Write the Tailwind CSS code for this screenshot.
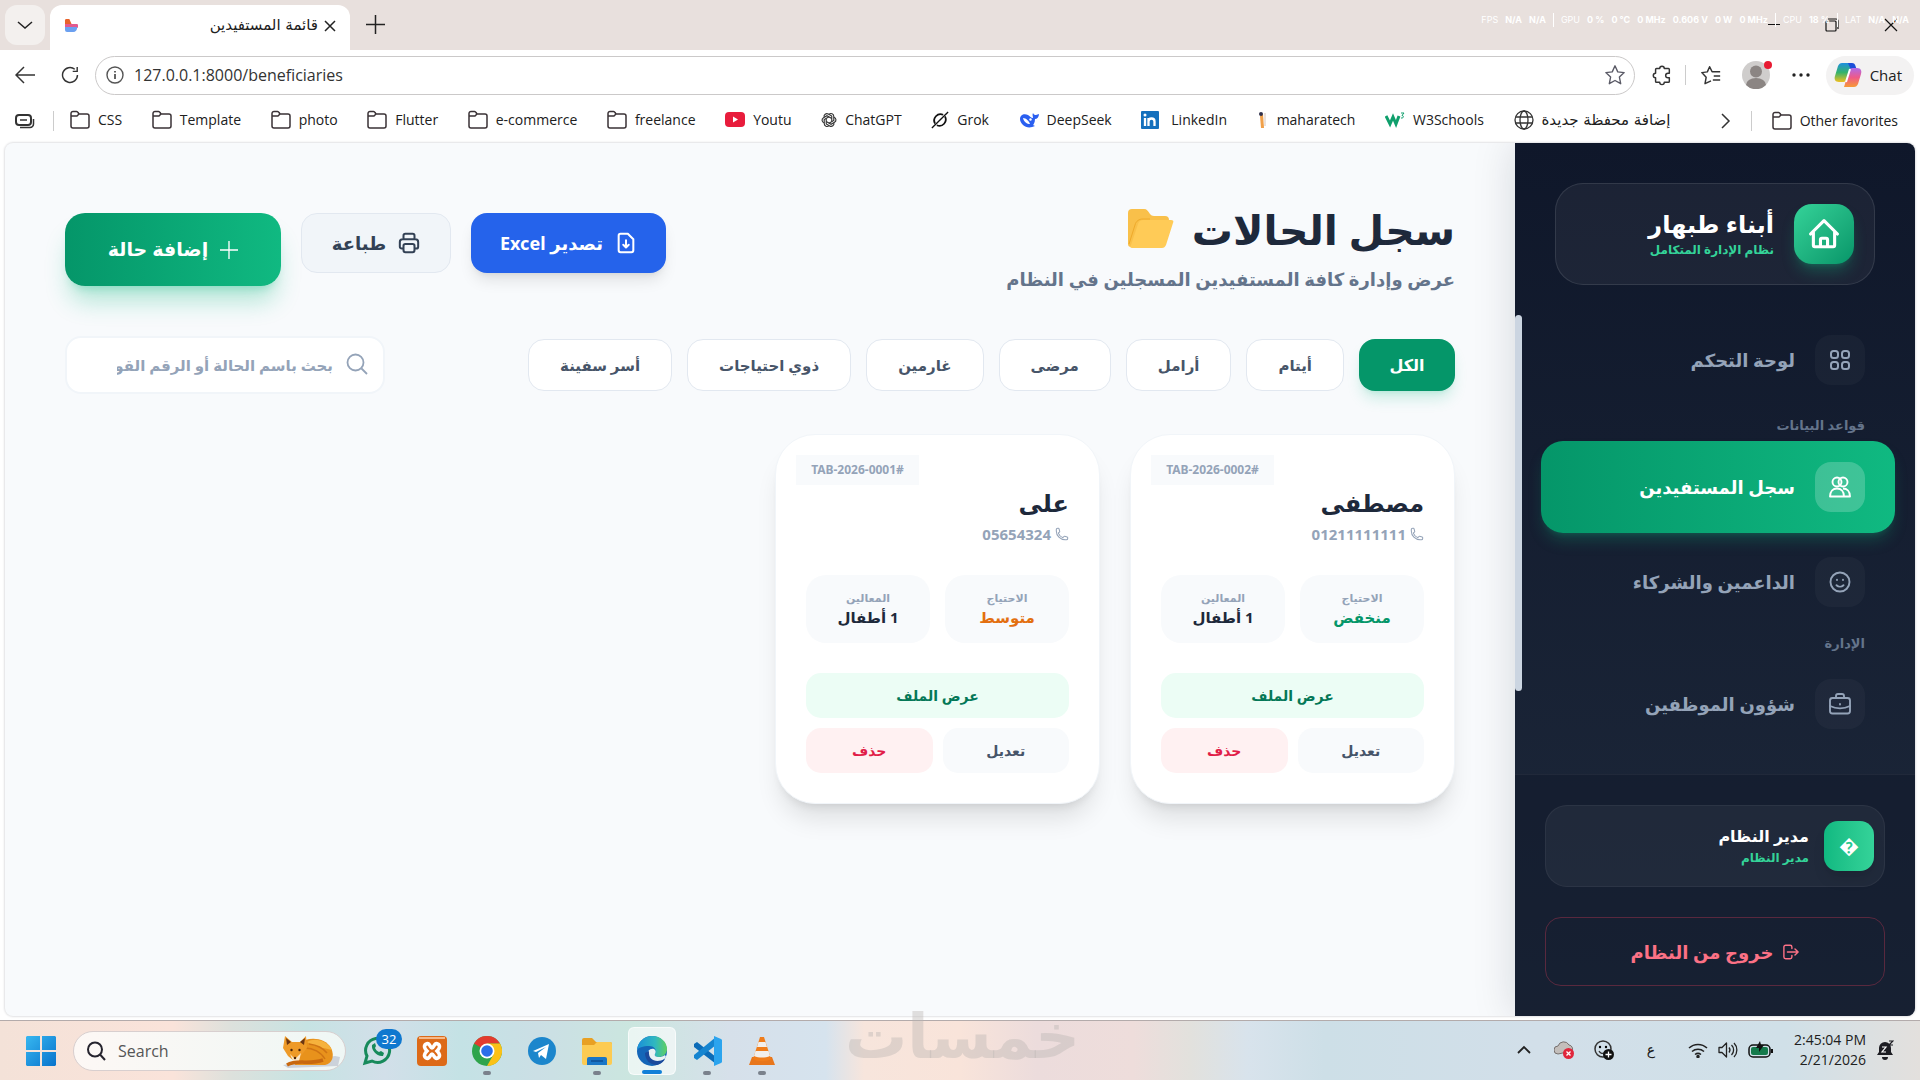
<!DOCTYPE html>
<html lang="ar">
<head>
  <meta charset="UTF-8">
  <meta name="viewport" content="width=device-width, initial-scale=1.0">
  <title>قائمة المستفيدين</title>
  <script src="https://cdn.jsdelivr.net/npm/@tailwindcss/browser@4"></script>
</head>
<body class="relative h-screen flex flex-col overflow-hidden bg-white font-['Open_Sans','DejaVu_Sans',sans-serif] text-[#202020]">

  <!-- Shared icons -->
  <svg class="hidden">
    <symbol id="folder" viewBox="0 0 20 20" fill="none" stroke="#3a3236" stroke-width="1.5" stroke-linejoin="round">
      <path d="M1 5V3.500a2 2 0 0 1 2-2h3.500a1.800 1.800 0 0 1 1.500 1L9 4H17a2 2 0 0 1 2 2v10a2 2 0 0 1-2 2H3a2 2 0 0 1-2-2V5M1 6h6l2-2"/>
    </symbol>
    <symbol id="phone" viewBox="0 0 24 24" fill="none" stroke="currentColor" stroke-width="1.800" stroke-linecap="round" stroke-linejoin="round">
      <path d="M2.250 6.750c0 8.284 6.716 15 15 15h2.250a2.250 2.250 0 0 0 2.250-2.250v-1.372c0-.516-.351-.966-.852-1.091l-4.423-1.106c-.44-.11-.902.055-1.173.417l-.97 1.293c-.282.376-.769.542-1.210.380a12.035 12.035 0 0 1-7.143-7.143c-.162-.441.004-.928.380-1.210l1.293-.970c.363-.271.527-.734.417-1.173L6.963 3.102a1.125 1.125 0 0 0-1.091-.852H4.500A2.250 2.250 0 0 0 2.250 4.500v2.250Z"/>
    </symbol>
  </svg>

  <!-- Tab strip -->
  <header class="h-[50px] shrink-0 flex items-end bg-[#e8e0dd]">
    <button aria-label="Tabs" class="ml-[5px] mb-[5px] size-10 flex items-center justify-center rounded-xl bg-[#f3f0ee]">
      <svg class="w-4 h-4" viewBox="0 0 16 16" fill="none" stroke="#222" stroke-width="1.5"><path d="M1 5l7 6 7-6"/></svg>
    </button>
    <div class="ml-[5px] h-[45px] w-[300px] flex items-center rounded-t-xl bg-white px-3.5 pb-1">
      <svg class="size-3.5" viewBox="0 0 14 14"><path d="M1 2.500A2.500 2.500 0 0 1 6 1.500L8 6H1z" fill="#e8622a"/><path d="M1 5h7l4 0a2 2 0 0 1 1 4H1z" fill="#e25a8e"/><path d="M1 8h12a4 4 0 0 1-4 5H3a2 2 0 0 1-2-2z" fill="#6ba0f0"/></svg>
      <span dir="rtl" class="ml-auto text-[15px] font-['DejaVu_Sans',sans-serif]">قائمة المستفيدين</span>
      <button aria-label="Close tab" class="ml-1.5"><svg class="size-3" viewBox="0 0 12 12" stroke="#222" stroke-width="1.500"><path d="M1 1l10 10M11 1L1 11"/></svg></button>
    </div>
    <button aria-label="New tab" class="ml-4 mb-4"><svg class="size-[19px]" viewBox="0 0 19 19" stroke="#222" stroke-width="1.500"><path d="M9.500 0v19M0 9.500h19"/></svg></button>
    <div class="ml-auto mb-[18px] mr-[22px] flex items-center gap-[45px]">
      <button aria-label="Minimize"><svg class="size-3" viewBox="0 0 12 12" stroke="#111" stroke-width="1"><path d="M0 5.500h12"/></svg></button>
      <button aria-label="Restore"><svg class="size-3.5" viewBox="0 0 14 14" fill="none" stroke="#111" stroke-width="1.200"><rect x="1" y="3" width="10" height="10" rx="1"/><path d="M3 1h8a2 2 0 0 1 2 2v8"/></svg></button>
      <button aria-label="Close"><svg class="size-3.5" viewBox="0 0 14 14" stroke="#111" stroke-width="1.200"><path d="M1 1l12 12M13 1L1 13"/></svg></button>
    </div>
  </header>

  <!-- Performance overlay -->
  <div class="absolute right-[11px] top-[13px] flex items-center gap-[7px] text-[9px] leading-3 font-['Inter',sans-serif] text-white pointer-events-none whitespace-nowrap">
    <span>FPS</span><b>N/A</b><b>N/A</b><i class="h-3.5 w-px bg-white"></i>
    <span>GPU</span><b>0 %</b><b>0 °C</b><b>0 MHz</b><b>0.606 V</b><b>0 W</b><b>0 MHz</b><i class="h-3.5 w-px bg-white"></i>
    <span>CPU</span><b>18 %</b><i class="h-3.5 w-px bg-white"></i>
    <span>LAT</span><b>N/A</b><b>N/A</b>
  </div>

  <!-- Address bar -->
  <div class="h-[50px] shrink-0 flex items-center pl-[15px] pr-1.5">
    <button aria-label="Back"><svg class="size-5" viewBox="0 0 20 20" fill="none" stroke="#333" stroke-width="1.500"><path d="M20 10H1M9 2l-8 8 8 8"/></svg></button>
    <button aria-label="Refresh" class="ml-[26px]"><svg class="size-[18px]" viewBox="0 0 20 20" fill="none" stroke="#333" stroke-width="1.600"><path d="M18.300 10a8.300 8.300 0 1 1-3-6.400M18 1v5h-5"/></svg></button>
    <div class="ml-4 h-[39px] flex-1 flex items-center rounded-full border border-[#cbc9c9] pl-2.5 pr-2">
      <svg class="size-[18px]" viewBox="0 0 18 18" fill="none" stroke="#555" stroke-width="1.400"><circle cx="9" cy="9" r="8"/><path d="M9 8v5M9 5v1.500" stroke-width="1.800"/></svg>
      <input aria-label="Address" value="127.0.0.1:8000/beneficiaries" class="ml-2.5 flex-1 text-base text-[#333] outline-none">
      <svg class="size-[22px]" viewBox="0 0 24 24" fill="none" stroke="#5a5a66" stroke-width="1.500" stroke-linejoin="round"><path d="M12 2l3 6.600 7 .800-5.200 4.900 1.400 7.200L12 18l-6.200 3.500 1.400-7.200L2 9.400l7-.800z"/></svg>
    </div>
    <button aria-label="Extensions" class="ml-4"><svg class="size-[22px]" viewBox="0 0 24 24" fill="none" stroke="#333" stroke-width="1.600" stroke-linejoin="round"><path d="M9.500 5a2.500 2.500 0 0 1 5 0H19a1 1 0 0 1 1 1v4h-1.500a2.500 2.500 0 0 0 0 5H20v4a1 1 0 0 1-1 1h-4.500a2.500 2.500 0 0 1-5 0H6a1 1 0 0 1-1-1v-4a2.500 2.500 0 0 1 0-5V6a1 1 0 0 1 1-1z"/></svg></button>
    <span class="ml-3 h-5 w-px bg-[#ccc]"></span>
    <button aria-label="Favorites" class="ml-3.5"><svg class="size-[22px]" viewBox="0 0 24 24" fill="none" stroke="#333" stroke-width="1.600" stroke-linejoin="round"><path d="M12 18.500L5.500 21.500l1.200-7L2 9.400l6-.800L10.500 3l2.700 5.500H22M15 13h7M14 17.500h8"/></svg></button>
    <button aria-label="Profile" class="relative ml-5">
      <svg class="size-7" viewBox="0 0 28 28"><circle cx="14" cy="14" r="14" fill="#cfcdcc"/><circle cx="14" cy="10.500" r="6" fill="#8b8583"/><path d="M4 24a10 7 0 0 1 20 0 14 14 0 0 1-20 0z" fill="#8b8583"/></svg>
      <span class="absolute top-0 -right-0.5 size-2 rounded-full bg-[#e81b32]"></span>
    </button>
    <button aria-label="More" class="ml-[22px]"><svg class="w-[18px] h-1" viewBox="0 0 18 4" fill="#222"><circle cx="2" cy="2" r="1.700"/><circle cx="9" cy="2" r="1.700"/><circle cx="16" cy="2" r="1.700"/></svg></button>
    <button class="ml-4 h-[39px] flex items-center gap-2 rounded-full bg-[#f3f2f2] pl-2 pr-3 text-[15px]">
      <svg class="size-7" viewBox="0 0 28 28">
        <defs><linearGradient id="copA" x1="0" y1="0" x2="0" y2="1"><stop offset="0" stop-color="#1d8fe0"/><stop offset=".5" stop-color="#35b36b"/><stop offset="1" stop-color="#f0c020"/></linearGradient><linearGradient id="copB" x1="0" y1="0" x2="0" y2="1"><stop offset="0" stop-color="#b06be8"/><stop offset=".5" stop-color="#ef5a88"/><stop offset="1" stop-color="#f79a35"/></linearGradient></defs>
        <path d="M8 2h10l-5 16a4 4 0 0 1-4 3H5c-4 0-5-3-4-6L4 5c1-2 2-3 4-3z" fill="url(#copA)"/><path d="M14 2h4c2 0 3 1 3.500 3l1 3h-6z" fill="#1c4fd8"/><path d="M20 26H10l5-16a4 4 0 0 1 4-3h4c4 0 5 3 4 6l-3 10c-1 2-2 3-4 3z" fill="url(#copB)"/><path d="M16 8l-4 13" stroke="#fff" stroke-width="2"/>
      </svg>
      Chat
    </button>
  </div>

  <!-- Bookmarks -->
  <nav class="h-[43px] shrink-0 flex items-center pl-[15px] pr-[22px] pb-0.5 text-sm whitespace-nowrap">
    <svg class="size-5" viewBox="0 0 20 20" fill="none" stroke="#333" stroke-width="2"><rect x="1" y="4" width="15" height="10" rx="3"/><path d="M5 9h7M5 16.500h10a3.500 3.500 0 0 0 3.500-3.500V8" stroke-width="1.500"/></svg>
    <span class="ml-[18px] h-5 w-px bg-[#ccc]"></span>
    <div class="ml-4 flex-1 flex items-center justify-between">
      <a href="#" class="flex items-center gap-2"><svg class="size-5"><use href="#folder"/></svg>CSS</a>
      <a href="#" class="flex items-center gap-2"><svg class="size-5"><use href="#folder"/></svg>Template</a>
      <a href="#" class="flex items-center gap-2"><svg class="size-5"><use href="#folder"/></svg>photo</a>
      <a href="#" class="flex items-center gap-2"><svg class="size-5"><use href="#folder"/></svg>Flutter</a>
      <a href="#" class="flex items-center gap-2"><svg class="size-5"><use href="#folder"/></svg>e-commerce</a>
      <a href="#" class="flex items-center gap-2"><svg class="size-5"><use href="#folder"/></svg>freelance</a>
      <a href="#" class="flex items-center gap-2"><svg class="size-5" viewBox="0 0 20 20"><rect y="2" width="20" height="15" rx="4" fill="#e81c3c"/><path d="M8 6.500l5 3-5 3z" fill="#fff"/></svg>Youtu</a>
      <a href="#" class="flex items-center gap-2"><svg class="size-4" viewBox="0 0 20 20" fill="none" stroke="#333" stroke-width="1.400"><g id="petal"><path d="M10 3a3.500 3.500 0 0 1 6 2.500v5L10 14"/></g><use href="#petal" transform="rotate(60 10 10)"/><use href="#petal" transform="rotate(120 10 10)"/><use href="#petal" transform="rotate(180 10 10)"/><use href="#petal" transform="rotate(240 10 10)"/><use href="#petal" transform="rotate(300 10 10)"/></svg>ChatGPT</a>
      <a href="#" class="flex items-center gap-2"><svg class="size-[18px]" viewBox="0 0 20 20" fill="none" stroke="#111" stroke-width="2"><path d="M13.500 4.200A7 7 0 0 0 4.500 14M6.500 15.800A7 7 0 0 0 15.500 6"/><path d="M1 19L19 1" stroke-width="1.500"/></svg>Grok</a>
      <a href="#" class="flex items-center gap-2"><svg class="size-5" viewBox="0 0 20 20"><path d="M1 9c0-4 4-6 8-4 2 1 3 3 5 3 0-2-1-3 0-5 1 2 2 2 3 2s2-1 3-1c0 3-2 5-4 5 0 4-2 6-2 6l2 1c-4 2-9 2-12-1C2 13 1 11 1 9z" fill="#2a5ff0"/><path d="M4 8c3 0 6 3 7 6-3 0-6-2-7-6z" fill="#fff"/><circle cx="11.500" cy="9.500" r="1.200" fill="#fff"/></svg>DeepSeek</a>
      <a href="#" class="flex items-center gap-3"><svg class="size-[18px]" viewBox="0 0 18 18"><rect width="18" height="18" rx="1" fill="#1470bd"/><path d="M4 7v8M7.500 15V7M7.500 10.500c0-4 6-4 6 0V15" fill="none" stroke="#fff" stroke-width="2.300"/><circle cx="4" cy="4" r="1.500" fill="#fff"/></svg>LinkedIn</a>
      <a href="#" class="flex items-center gap-2"><svg class="w-3 h-5" viewBox="0 0 12 20"><path d="M3 6l3-2 1 14H4z" fill="#f0a04a"/><circle cx="4" cy="4" r="2" fill="#30304a"/><path d="M8 3v13" stroke="#e3d8d2" stroke-width="1.500"/></svg>maharatech</a>
      <a href="#" class="flex items-center gap-2"><svg class="size-5" viewBox="0 0 20 20" fill="none" stroke="#0f9f6c" stroke-width="3"><path d="M1 6l4 8 3-7 3 7 3-8"/><path d="M16 3h3l-2 2.500c2 0 2 3-1 2.500" stroke-width="1"/></svg>W3Schools</a>
      <a href="#" class="flex items-center gap-2"><svg class="size-5" viewBox="0 0 20 20" fill="none" stroke="#333" stroke-width="1.300"><circle cx="10" cy="10" r="9"/><ellipse cx="10" cy="10" rx="4" ry="9"/><path d="M2 7h16M2 13h16"/></svg><span dir="rtl" class="text-[15px] font-['DejaVu_Sans',sans-serif]">إضافة محفظة جديدة</span></a>
    </div>
    <button aria-label="More bookmarks" class="ml-[50px]"><svg class="w-2.5 h-4" viewBox="0 0 10 16" fill="none" stroke="#333" stroke-width="1.500"><path d="M1 1l7 7-7 7"/></svg></button>
    <span class="ml-5 h-5 w-px bg-[#ccc]"></span>
    <a href="#" class="ml-5 flex items-center gap-2"><svg class="size-5"><use href="#folder"/></svg>Other favorites</a>
  </nav>

  <!-- Web page -->
  <div dir="rtl" class="flex-1 min-h-0 mx-[5px] mb-1 flex overflow-hidden rounded-lg bg-[#f8fafc] shadow-[0_0_2px_1px_#e2e2e4] font-['Noto_Sans','DejaVu_Sans',sans-serif] text-[#1e293b]">

    <!-- Sidebar -->
    <aside class="w-[400px] shrink-0 flex flex-col bg-linear-to-b from-[#0f172a] to-[#1e293b] shadow-[0_0_40px_rgba(15,23,42,0.15)]">
      <div class="mx-10 mt-10 flex items-center gap-5 rounded-[28px] border border-white/10 bg-white/5 p-5">
        <div class="size-[60px] flex items-center justify-center rounded-[18px] bg-linear-to-br from-[#34d399] to-[#059669] shadow-lg shadow-[#10b981]/30">
          <svg class="size-[34px]" viewBox="0 0 24 24" fill="none" stroke="#fff" stroke-width="2.200" stroke-linecap="round" stroke-linejoin="round"><path d="M2.500 12L12 2.500l9.500 9.500M4.500 10.500V20a1 1 0 0 0 1 1h13a1 1 0 0 0 1-1v-9.500M9.500 21v-5a1 1 0 0 1 1-1h3a1 1 0 0 1 1 1v5"/></svg>
        </div>
        <div>
          <h1 class="text-2xl leading-8 font-bold text-white">أبناء طبهار</h1>
          <p class="text-xs leading-5 font-bold text-[#34d399]">نظام الإدارة المتكامل</p>
        </div>
      </div>

      <div class="relative flex-1 min-h-0 mt-[30px] pr-5 pl-[26px] text-lg font-bold text-[#94a3b8]">
        <div class="absolute left-0 top-0 w-[7px] h-[376px] rounded-full bg-[#cbd5e1]"></div>
        <a href="#" class="flex h-[90px] items-center gap-5 px-[30px]">
          <span class="size-[50px] flex items-center justify-center rounded-2xl bg-white/3"><svg class="size-6" viewBox="0 0 24 24" fill="none" stroke="currentColor" stroke-width="2"><rect x="3" y="3" width="7" height="7" rx="2.500"/><rect x="14" y="3" width="7" height="7" rx="2.500"/><rect x="3" y="14" width="7" height="7" rx="2.500"/><rect x="14" y="14" width="7" height="7" rx="2.500"/></svg></span>
          لوحة التحكم
        </a>
        <p class="h-9 pt-2.5 px-[30px] text-[13px] leading-5 text-[#64748b]">قواعد البيانات</p>
        <a href="#" class="flex h-[92px] items-center gap-5 rounded-[22px] bg-linear-to-l from-[#10b981] to-[#059669] px-[30px] text-white shadow-lg shadow-[#10b981]/25">
          <span class="size-[50px] flex items-center justify-center rounded-2xl bg-white/20"><svg class="size-6" viewBox="0 0 24 24" fill="none" stroke="currentColor" stroke-width="1.900" stroke-linejoin="round"><circle cx="9" cy="7" r="4.500"/><circle cx="15" cy="7" r="4.500"/><path d="M2 21.500c0-5 3-8 7-8s7 3 7 8zM15 13.500c4 0 7 3 7 8h-6"/></svg></span>
          سجل المستفيدين
        </a>
        <a href="#" class="mt-1 flex h-[90px] items-center gap-5 px-[30px]">
          <span class="size-[50px] flex items-center justify-center rounded-2xl bg-white/3"><svg class="size-6" viewBox="0 0 24 24" fill="none" stroke="currentColor" stroke-width="1.900" stroke-linecap="round"><circle cx="12" cy="12" r="9.500"/><path d="M8.500 15.200a5 5 0 0 0 7 0M9 9.700v.300M15 9.700v.300"/></svg></span>
          الداعمين والشركاء
        </a>
        <p class="h-8 pt-1.5 px-[30px] text-[13px] leading-5 text-[#64748b]">الإدارة</p>
        <a href="#" class="flex h-[90px] items-center gap-5 px-[30px]">
          <span class="size-[50px] flex items-center justify-center rounded-2xl bg-white/3"><svg class="size-6" viewBox="0 0 24 24" fill="none" stroke="currentColor" stroke-width="1.900" stroke-linecap="round" stroke-linejoin="round"><rect x="2" y="6" width="20" height="15.500" rx="2.500"/><path d="M8 6V4a2 2 0 0 1 2-2h4a2 2 0 0 1 2 2v2M2 14c6 3 14 3 20 0M12 12v.500"/></svg></span>
          شؤون الموظفين
        </a>
      </div>

      <div class="border-t border-white/5 bg-[#0f172a]/50 px-[30px] pt-[30px] pb-[30px]">
        <div class="h-[82px] flex items-center gap-[15px] rounded-[22px] border border-white/5 bg-white/5 px-2.5">
          <span class="size-[50px] flex items-center justify-center rounded-[14px] bg-linear-to-r from-[#10b981] to-[#34d399] text-xl text-white shadow-lg">&#xFFFD;</span>
          <div>
            <p class="text-base leading-6 font-bold text-white">مدير النظام</p>
            <p class="text-xs leading-5 font-bold text-[#34d399]">مدير النظام</p>
          </div>
        </div>
        <button class="mt-[30px] h-[69px] w-full flex items-center justify-center gap-2.5 rounded-2xl border border-[#f43f5e]/30 text-lg font-bold text-[#fb7185]">
          <svg class="size-4" viewBox="0 0 18 18" fill="none" stroke="currentColor" stroke-width="1.600" stroke-linecap="round" stroke-linejoin="round"><path d="M10 5V3.500a2 2 0 0 0-2-2H3a2 2 0 0 0-2 2v11a2 2 0 0 0 2 2h5a2 2 0 0 0 2-2V13M5 9h12M13.500 5.500L17 9l-3.500 3.500"/></svg>
          خروج من النظام
        </button>
      </div>
    </aside>

    <!-- Cases -->
    <main class="flex-1 min-w-0 px-[60px] pt-[60px]">
      <div class="flex items-start justify-between">
        <div>
          <h2 class="flex items-center gap-[18px] text-[41px] leading-[52px] font-bold">
            سجل الحالات
            <svg class="w-[46px] h-[40px]" viewBox="0 0 46 40"><path d="M0 4a4 4 0 0 1 4-4h12c3 0 4 2 6 5 1 1 2 2 4 2h11a4 4 0 0 1 4 4v4L8 38H3a3 3 0 0 1-3-3z" fill="#f9c04a"/><path d="M3 36L10 15c1-3 3-4 5-4h28c2 0 3 1 2 3l-7 22c-1 2-2 3-4 3H4c-2 0-2-1-1-3z" fill="#ffcb57"/><path d="M1 35L7 16c1-4 4-6 8-6h7" fill="none" stroke="#efaa2a"/></svg>
          </h2>
          <p class="mt-2 text-lg leading-8 font-bold text-[#64748b]">عرض وإدارة كافة المستفيدين المسجلين في النظام</p>
        </div>
        <div class="mt-2.5 flex items-start gap-5 text-lg font-bold">
          <button class="h-[60px] w-[195px] flex items-center justify-center gap-3 rounded-2xl bg-[#2563eb] text-white shadow-lg">
            <svg class="size-[22px]" viewBox="0 0 24 24" fill="none" stroke="currentColor" stroke-width="2.200" stroke-linecap="round" stroke-linejoin="round"><path d="M4 4a2 2 0 0 1 2-2h8l6 6v12a2 2 0 0 1-2 2H6a2 2 0 0 1-2-2zM12 9v8M9 14l3 3 3-3"/></svg>
            تصدير Excel
          </button>
          <button class="h-[60px] w-[150px] flex items-center justify-center gap-3 rounded-2xl border border-[#e2e8f0] bg-[#f1f5f9] text-[#334155]">
            <svg class="size-[22px]" viewBox="0 0 24 24" fill="none" stroke="currentColor" stroke-width="2.200" stroke-linejoin="round"><path d="M6 8V4a2 2 0 0 1 2-2h8a2 2 0 0 1 2 2v4M6 18H4a2 2 0 0 1-2-2v-5a3 3 0 0 1 3-3h14a3 3 0 0 1 3 3v5a2 2 0 0 1-2 2h-2"/><rect x="6" y="13" width="12" height="9" rx="2"/></svg>
            طباعة
          </button>
          <button class="h-[73px] w-[216px] flex items-center justify-center gap-3 rounded-[20px] bg-linear-to-l from-[#10b981] to-[#059669] text-[19px] text-white shadow-xl shadow-[#10b981]/30">
            <svg class="size-[18px]" viewBox="0 0 20 20" stroke="currentColor" stroke-width="1.500"><path d="M10 0v20M0 10h20"/></svg>
            إضافة حالة
          </button>
        </div>
      </div>

      <div class="mt-[41px] flex items-center justify-between">
        <div class="flex gap-[15px] text-[15px] font-bold text-[#475569] whitespace-nowrap">
          <button class="h-[52px] w-24 rounded-2xl bg-[#059669] text-base text-white shadow-lg shadow-[#10b981]/20">الكل</button>
          <button class="h-[52px] rounded-2xl border border-[#e2e8f0] bg-white px-[31px]">أيتام</button>
          <button class="h-[52px] rounded-2xl border border-[#e2e8f0] bg-white px-[31px]">أرامل</button>
          <button class="h-[52px] rounded-2xl border border-[#e2e8f0] bg-white px-[31px]">مرضى</button>
          <button class="h-[52px] rounded-2xl border border-[#e2e8f0] bg-white px-[31px]">غارمين</button>
          <button class="h-[52px] rounded-2xl border border-[#e2e8f0] bg-white px-[31px]">ذوي احتياجات</button>
          <button class="h-[52px] rounded-2xl border border-[#e2e8f0] bg-white px-[31px]">أسر سفينة</button>
        </div>
        <div class="relative w-80">
          <input aria-label="بحث" placeholder="بحث باسم الحالة أو الرقم القومي" class="h-[58px] w-full rounded-2xl border-2 border-[#f1f5f9] bg-white px-[50px] text-[15px] font-bold placeholder:text-[#94a3b8]">
          <svg class="absolute right-4 top-4 size-6 text-[#94a3b8]" viewBox="0 0 24 24" fill="none" stroke="currentColor" stroke-width="1.800"><circle cx="10.500" cy="10.500" r="8"/><path d="M16.500 16.500L22 22"/></svg>
        </div>
      </div>

      <div class="mt-10 grid grid-cols-4 gap-[30px]">
        <article class="relative rounded-[40px] border border-[#f1f5f9] bg-white px-[30px] pt-[50px] pb-[30px] shadow-xl">
          <span class="absolute left-5 top-5 h-[30px] w-[123px] bg-[#f8fafc] text-center text-xs leading-[30px] font-bold text-[#94a3b8]">TAB-2026-0002#</span>
          <h3 class="text-2xl leading-9 font-bold">مصطفى</h3>
          <p class="flex items-center gap-1 text-[15px] leading-[26px] font-bold text-[#94a3b8]"><svg class="size-3.5"><use href="#phone"/></svg>01211111111</p>
          <div class="mt-7 grid grid-cols-2 gap-[15px] text-center font-bold">
            <div class="h-[68px] rounded-[20px] bg-[#f8fafc] pt-3.5">
              <p class="text-[11px] leading-[18px] text-[#94a3b8]">الاحتياج</p>
              <p class="text-[15px] leading-5 text-[#059669]">منخفض</p>
            </div>
            <div class="h-[68px] rounded-[20px] bg-[#f8fafc] pt-3.5">
              <p class="text-[11px] leading-[18px] text-[#94a3b8]">المعالين</p>
              <p class="text-[15px] leading-5">1 أطفال</p>
            </div>
          </div>
          <div class="mt-[30px] grid grid-cols-2 gap-2.5 text-sm font-bold">
            <a href="#" class="col-span-2 h-[45px] rounded-[15px] bg-[#ecfdf5] text-center leading-[45px] text-[#047857]">عرض الملف</a>
            <a href="#" class="h-[45px] rounded-[15px] bg-[#f8fafc] text-center leading-[45px] text-[#475569]">تعديل</a>
            <button class="h-[45px] rounded-[15px] bg-[#fff1f2] text-[#e11d48]">حذف</button>
          </div>
        </article>

        <article class="relative rounded-[40px] border border-[#f1f5f9] bg-white px-[30px] pt-[50px] pb-[30px] shadow-xl">
          <span class="absolute left-5 top-5 h-[30px] w-[123px] bg-[#f8fafc] text-center text-xs leading-[30px] font-bold text-[#94a3b8]">TAB-2026-0001#</span>
          <h3 class="text-2xl leading-9 font-bold">على</h3>
          <p class="flex items-center gap-1 text-[15px] leading-[26px] font-bold text-[#94a3b8]"><svg class="size-3.5"><use href="#phone"/></svg>05654324</p>
          <div class="mt-7 grid grid-cols-2 gap-[15px] text-center font-bold">
            <div class="h-[68px] rounded-[20px] bg-[#f8fafc] pt-3.5">
              <p class="text-[11px] leading-[18px] text-[#94a3b8]">الاحتياج</p>
              <p class="text-[15px] leading-5 text-[#e36f10]">متوسط</p>
            </div>
            <div class="h-[68px] rounded-[20px] bg-[#f8fafc] pt-3.5">
              <p class="text-[11px] leading-[18px] text-[#94a3b8]">المعالين</p>
              <p class="text-[15px] leading-5">1 أطفال</p>
            </div>
          </div>
          <div class="mt-[30px] grid grid-cols-2 gap-2.5 text-sm font-bold">
            <a href="#" class="col-span-2 h-[45px] rounded-[15px] bg-[#ecfdf5] text-center leading-[45px] text-[#047857]">عرض الملف</a>
            <a href="#" class="h-[45px] rounded-[15px] bg-[#f8fafc] text-center leading-[45px] text-[#475569]">تعديل</a>
            <button class="h-[45px] rounded-[15px] bg-[#fff1f2] text-[#e11d48]">حذف</button>
          </div>
        </article>
      </div>
    </main>
  </div>

  <!-- Taskbar -->
  <footer class="h-[60px] shrink-0 flex items-center border-t border-[#b3abab] bg-[linear-gradient(90deg,#f4e2d8_0%,#fae3da_9%,#dde1dc_12%,#c6e3e3_16%,#d2dfe9_20%,#c4e2e5_24%,#cbdfe5_28%,#cbe6df_33%,#d6e0ea_38%,#d6e3ee_43%,#f7e5dc_45%,#f9e4da_50%,#ecdcdc_54%,#eedddb_59%,#e2e1dd_62%,#d8e3ec_65%,#cddfe7_69%,#d2dfe9_80%,#d0e0e8_93%,#e3e0dd_100%)]">
    <button aria-label="Start" class="ml-[26px]"><svg class="size-[30px]" viewBox="0 0 30 30"><defs><linearGradient id="win" x1="0" y1="0" x2="1" y2="1"><stop offset="0" stop-color="#37b7f0"/><stop offset="1" stop-color="#0873cc"/></linearGradient></defs><path d="M1 0h13v14H0V1zM16 0h13l1 1v13H16zM0 16h14v14H1l-1-1zM16 16h14v13l-1 1H16z" fill="url(#win)"/></svg></button>
    <div class="ml-[17px] h-10 w-[273px] flex items-center rounded-full border border-[#d8cfcf] bg-linear-to-r from-[#fdf8f5] to-[#eff7f5] pl-3 pr-1">
      <svg class="size-5" viewBox="0 0 20 20" fill="none" stroke="#26242e" stroke-width="2"><circle cx="9" cy="8.500" r="7"/><path d="M14 13.500l5 5.500"/></svg>
      <input aria-label="Search" placeholder="Search" class="ml-3 w-0 flex-1 text-base placeholder:text-[#555]">
      <svg class="w-[60px] h-[34px]" viewBox="0 0 60 34"><path d="M2 31l52-9 5 1-2 9-50 2z" fill="#ccd2da"/><path d="M18 10C26 2 44 3 50 14c4 8 1 16-6 17H14z" fill="#e8921c"/><path d="M26 8c8-5 21-1 25 8-8-2-17-3-25-8z" fill="#f6b23c"/><path d="M24 14c8 0 16 4 20 11M28 10c8 1 14 4 18 9" fill="none" stroke="#cf7414" stroke-width="1.500"/><path d="M4 2l7 6h8l6-6 1 12-7 9-6 4-6-5-5-8z" fill="#ee9a28"/><path d="M5 4l5 4-4 3zM24 4l-5 4 4 3z" fill="#6b3512"/><path d="M9 20l5 5 6-6-2 8h-6z" fill="#fbe6c6"/><circle cx="10.500" cy="16" r="1.200" fill="#4a230a"/><circle cx="18.500" cy="16" r="1.200" fill="#4a230a"/><circle cx="14" cy="24" r="1.200" fill="#4a230a"/><path d="M6 31c10-6 22 0 36-5" stroke="#c8680f" stroke-width="3.500" fill="none"/></svg>
    </div>

    <div class="ml-[7px] flex items-center gap-[7px]">
      <button aria-label="WhatsApp" class="relative size-12 flex items-center justify-center"><svg class="size-[30px]" viewBox="0 0 30 30" fill="none" stroke="#178a5b" stroke-width="3"><path d="M3 27l2-7a12 12 0 1 1 5 5z"/><path d="M10 9c-1 5 5 12 11 11l1-3-3-2-2 1c-2-1-3-2-4-4l1-2-1-3z" fill="#178a5b" stroke="none"/></svg><span class="absolute left-[23px] top-0.5 h-5 w-[26px] rounded-full bg-[#0f78cf] text-center text-[13px] leading-5 text-white">32</span></button>
      <button aria-label="XAMPP" class="relative size-12 flex items-center justify-center"><svg class="size-[30px]" viewBox="0 0 30 30"><rect width="30" height="30" rx="4" fill="#dd6a18"/><path d="M2 2h26" stroke="#f4b98a" stroke-width="2"/><path d="M9 8c4-2 4 4 6 4s2-6 6-4c3 2 1 5-1 7 2 2 4 5 1 7-4 2-4-4-6-4s-2 6-6 4c-3-2-1-5 1-7-2-2-4-5-1-7z" fill="none" stroke="#fff" stroke-width="3.500"/></svg></button>
      <button aria-label="Chrome" class="relative size-12 flex items-center justify-center"><svg class="size-[30px]" viewBox="0 0 30 30"><circle cx="15" cy="15" r="15" fill="#2ea44c"/><path d="M15 15L2 7.500A15 15 0 0 1 28 7.500H15z" fill="#e33b2e"/><path d="M15 7.500h13A15 15 0 0 1 15 30l6.500-11.500z" fill="#fbc116"/><circle cx="15" cy="15" r="7.500" fill="#fff"/><circle cx="15" cy="15" r="5.800" fill="#2a6fe8"/></svg><span class="absolute bottom-0 h-1 w-2 rounded-full bg-[#7a818c]"></span></button>
      <button aria-label="Telegram" class="relative size-12 flex items-center justify-center"><svg class="size-7" viewBox="0 0 28 28"><circle cx="14" cy="14" r="14" fill="#1c86cc"/><path d="M5 14l16-7-3 15-5-4-2 3-1-5 8-6-10 5z" fill="#fff"/></svg></button>
      <button aria-label="Explorer" class="relative size-12 flex items-center justify-center"><svg class="size-[30px]" viewBox="0 0 30 30"><path d="M0 4a2 2 0 0 1 2-2h8l4 4h14a2 2 0 0 1 2 2v4H0z" fill="#e8a023"/><path d="M0 9h12l3-3h13a2 2 0 0 1 2 2v19a2 2 0 0 1-2 2H2a2 2 0 0 1-2-2z" fill="#fccb52"/><path d="M5 23a2 2 0 0 1 2-2h16a2 2 0 0 1 2 2v6H5z" fill="#1a76c6"/><path d="M9 25h12" stroke="#0e4f94" stroke-width="1.500"/></svg><span class="absolute bottom-0 h-1 w-2 rounded-full bg-[#7a818c]"></span></button>
      <button aria-label="Edge" class="relative size-12 flex items-center justify-center rounded-md border border-white/60 bg-white/60"><svg class="size-[30px]" viewBox="0 0 30 30"><defs><linearGradient id="edg" x1="0" y1="0" x2="1" y2="0"><stop offset="0" stop-color="#1a8fd8"/><stop offset=".6" stop-color="#2fb8c0"/><stop offset="1" stop-color="#5fd060"/></linearGradient></defs><circle cx="15" cy="15" r="15" fill="#1466b8"/><path d="M0 14C1 5 8 0 15 0c9 0 15 6 15 13 0 5-4 8-8 8-3 0-5-1-4-3 2-5-1-8-6-8C6 10 1 12 0 14z" fill="url(#edg)"/><path d="M10 20c0-5 3-8 7-7 2 1 2 3 1 5s1 3 4 3c2 0 4-.500 6-2l1 2c-3 4-7 6-12 5-4-1-7-3-7-6z" fill="#e8f2f4"/><path d="M8 17c0 7 5 12 12 12 4-1 7-4 8-6-8 4-17 2-16-8z" fill="#1b4a9c"/></svg><span class="absolute bottom-0 h-1 w-5 rounded-full bg-[#1180d8]"></span></button>
      <button aria-label="VS Code" class="relative size-12 flex items-center justify-center"><svg class="size-[30px]" viewBox="0 0 30 30"><path d="M2 8l3-2 19 15v7L2 11z" fill="#0b6cb8"/><path d="M2 22l3 2L24 9V1L2 19z" fill="#1585d0"/><path d="M22 0l7 3c1 .500 1 1 1 2v20c0 1 0 1.500-1 2l-7 3z" fill="#2ba4ee"/></svg><span class="absolute bottom-0 h-1 w-2 rounded-full bg-[#7a818c]"></span></button>
      <button aria-label="VLC" class="relative size-12 flex items-center justify-center"><svg class="size-[30px]" viewBox="0 0 30 30"><path d="M5 21h20l3 8H2z" fill="#e8761c"/><path d="M13 1h4l7 22c-4 3-14 3-18 0z" fill="#f07d1c"/><path d="M11.500 6h7l1.500 5H10zM8.500 15h13l1.500 5c-5 2-11 2-16 0z" fill="#f2efec"/></svg><span class="absolute bottom-0 h-1 w-2 rounded-full bg-[#7a818c]"></span></button>
    </div>

    <div class="ml-auto mr-[26px] flex items-center pb-0.5">
      <svg class="w-3.5 h-2.5" viewBox="0 0 14 10" fill="none" stroke="#222" stroke-width="1.800"><path d="M1 8l6-6 6 6"/></svg>
      <svg class="ml-[23px] w-5 h-5" viewBox="0 0 20 20"><path d="M4 14a4 4 0 0 1 0-8 6 6 0 0 1 11-1 4 4 0 0 1 3 6z" fill="#c3bebb" stroke="#77716f"/><circle cx="14.500" cy="13.500" r="5.500" fill="#e0263c"/><path d="M12.500 11.500l4 4M16.500 11.500l-4 4" stroke="#fff" stroke-width="1.300"/></svg>
      <svg class="ml-5 w-5 h-5" viewBox="0 0 20 20"><circle cx="9" cy="9" r="8" fill="none" stroke="#333" stroke-width="1.500"/><circle cx="6" cy="7" r="1.200"/><circle cx="12" cy="7" r="1.200"/><path d="M5 11c1 2 3 3 5 2" fill="none" stroke="#333" stroke-width="1.300"/><circle cx="14.500" cy="14.500" r="5.500" fill="#111"/><path d="M14.500 11.500v6M11.500 14.500h6" stroke="#fff" stroke-width="1.300"/></svg>
      <span class="ml-[33px] text-sm font-['DejaVu_Sans',sans-serif]">ع</span>
      <svg class="ml-[33px] w-5 h-4" viewBox="0 0 20 16" fill="none" stroke="#222" stroke-width="1.500"><path d="M1 6a13 13 0 0 1 18 0M4 9.500a9 9 0 0 1 12 0M7 12.500a5 5 0 0 1 6 0"/><circle cx="10" cy="14.500" r="1" fill="#222"/></svg>
      <svg class="ml-2.5 w-5 h-4" viewBox="0 0 20 16" fill="none" stroke="#222" stroke-width="1.300" stroke-linejoin="round"><path d="M1 5.500h3L8.500 1v14L4 10.500H1zM11 5.500a4 4 0 0 1 0 5M13.500 3a7 7 0 0 1 0 10M16 1a10 10 0 0 1 0 14"/></svg>
      <svg class="ml-2.5 w-[26px] h-5" viewBox="0 0 26 20"><rect x="1" y="5" width="21" height="12" rx="4" fill="none" stroke="#111" stroke-width="1.500"/><rect x="3" y="7" width="17" height="8" rx="2" fill="#147a4b"/><path d="M24 9v4" stroke="#111" stroke-width="2"/><path d="M12 1L8 8h3v4l5-7h-3z" fill="#111"/></svg>
      <div class="ml-3 w-20 text-right text-sm leading-5 whitespace-nowrap"><p>2:45:04 PM</p><p>2/21/2026</p></div>
      <svg class="ml-2.5 w-[18px] h-5" viewBox="0 0 18 20"><path d="M1 15l2-3V8a6 6 0 0 1 12 0v4l2 3zM6 17h6a3 3 0 0 1-6 0z" fill="#1c1c22"/><path d="M6 7h4l-4 5h4" fill="none" stroke="#fff" stroke-width="1.200"/><path d="M13 1h4l-4 4h4" fill="none" stroke="#1c1c22" stroke-width="1.200"/></svg>
    </div>
  </footer>

  <!-- Watermark -->
  <div dir="rtl" class="absolute left-[845px] bottom-0 text-[62px] leading-[86px] font-bold font-['DejaVu_Sans',sans-serif] text-[#b9b3b1]/40 pointer-events-none">خمسات</div>
</body>
</html>
